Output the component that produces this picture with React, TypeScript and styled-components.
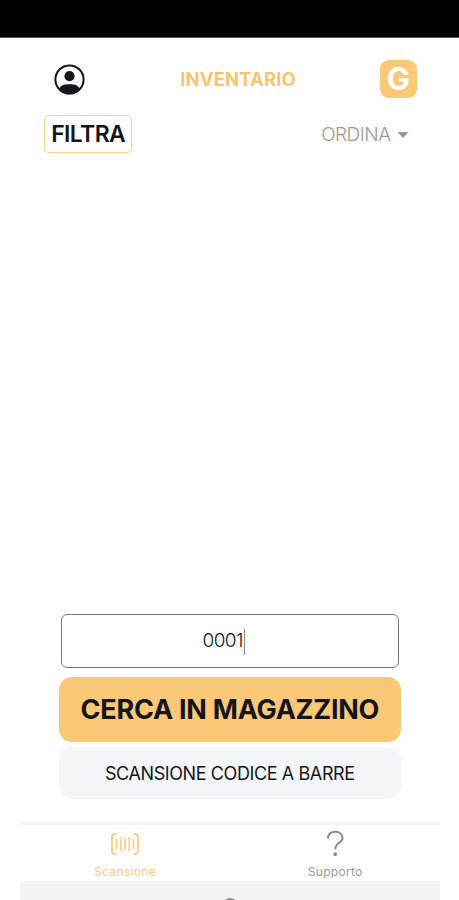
import React from "react";
import styled, { createGlobalStyle } from "styled-components";

const AMBER = "#f9c978";

const GlobalStyle = createGlobalStyle`
  * { box-sizing: border-box; }
  body { margin: 0; background: #fefefe; overflow: hidden; }
`;

const Screen = styled.div`
  width: 459px;
  height: 900px;
  display: flex;
  flex-direction: column;
  overflow: hidden;
  background: #fefefe;
  font-family: Inter, "Open Sans", sans-serif;
  color: #15151b;
`;

const StatusBar = styled.div`
  height: 38px;
  flex: none;
  background: #000;
  border-bottom: 1px solid #555;
`;

const Header = styled.header`
  display: grid;
  grid-template-columns: 60px 1fr 60px;
  align-items: center;
  height: 38px;
  margin: 22px 42px 0 54px;
  flex: none;
`;

const Icon = styled.svg`
  display: block;
`;

const Label = styled.span<{ $size: number; $weight: number; $spacing?: number; $color?: string }>`
  font-size: ${(p) => p.$size}px;
  font-weight: ${(p) => p.$weight};
  letter-spacing: ${(p) => p.$spacing ?? 0}px;
  margin-right: ${(p) => -(p.$spacing ?? 0)}px;
  color: ${(p) => p.$color ?? "inherit"};
  line-height: 1.2;
  white-space: nowrap;
`;

const Title = styled.h1`
  margin: 0 0 0 5px;
  display: flex;
  justify-content: center;
`;

const Logo = styled.div`
  justify-self: end;
  width: 37px;
  height: 38px;
  border-radius: 9px;
  background: ${AMBER};
  display: flex;
  align-items: center;
  justify-content: center;
`;

const Toolbar = styled.div`
  display: flex;
  justify-content: space-between;
  align-items: center;
  height: 38px;
  margin: 17px 50px 0 44px;
  flex: none;
`;

const FilterButton = styled.button`
  width: 88px;
  height: 38px;
  padding: 2px 0 0 1px;
  border: 1.5px solid #fad08c;
  border-radius: 5px;
  background: #fff;
  color: inherit;
  font-family: inherit;
  display: flex;
  align-items: center;
  justify-content: center;
`;

const SortButton = styled.button`
  border: 0;
  padding: 2px 0 0;
  background: none;
  font-family: inherit;
  display: flex;
  align-items: center;
  gap: 6px;
`;

const Results = styled.main`
  flex: 1;
`;

const SearchForm = styled.section`
  width: 342px;
  margin: 0 0 23px 59px;
  flex: none;
  display: flex;
  flex-direction: column;
  align-items: center;
`;

const CodeField = styled.div`
  width: 338px;
  height: 54px;
  margin-bottom: 9px;
  padding: 1px 12px 0 0;
  border: 1px solid #777;
  border-radius: 6px;
  background: #fff;
  display: flex;
  align-items: center;
  justify-content: center;
`;

const Caret = styled.span`
  width: 1px;
  height: 26px;
  margin-left: 1px;
  background: #888;
`;

const ActionButton = styled.button<{ $primary?: boolean }>`
  width: 342px;
  height: ${(p) => (p.$primary ? 65 : 52)}px;
  margin-bottom: ${(p) => (p.$primary ? 5 : 0)}px;
  padding: 2px 0 0;
  border: 0;
  border-radius: 13px;
  background: ${(p) => (p.$primary ? AMBER : "#f4f6fa")};
  color: inherit;
  font-family: inherit;
  display: flex;
  align-items: center;
  justify-content: center;
`;

const Navigation = styled.nav`
  width: 420px;
  height: 59px;
  margin-left: 20px;
  flex: none;
  display: grid;
  grid-template-columns: 1fr 1fr;
  border-top: 3px solid #f6f6f6;
  background: #fff;
`;

const Tab = styled.a`
  display: flex;
  flex-direction: column;
  align-items: center;
  justify-content: space-between;
  padding: 5px 0 2px;
`;

const TabIcon = styled.span`
  height: 27px;
  display: flex;
  align-items: center;
`;

const HomeStrip = styled.footer`
  width: 420px;
  height: 19px;
  margin-left: 20px;
  flex: none;
  display: flex;
  justify-content: center;
  padding-top: 17px;
  background: #f4f4f4;
  overflow: hidden;
`;

const HomeButton = styled.div`
  flex: none;
  width: 16px;
  height: 16px;
  border-radius: 50%;
  background: #8d8d8d;
`;

const ProfileIcon = () => (
  <Icon width="31" height="31" viewBox="0 0 31 31">
    <circle cx="15.5" cy="15.5" r="14.1" fill="#fff" stroke="#15151b" strokeWidth="2" />
    <circle cx="15.5" cy="12.2" r="5.1" fill="#15151b" />
    <path d="M5.4 24.6C6.500 21.5 9.500 20.2 15.5 20.2s9 1.3 10.100 4.400a13.6 13.6 0 0 1-20.200 0Z" fill="#15151b" />
  </Icon>
);

const ScanIcon = () => (
  <Icon width="31" height="24" viewBox="0 0 31 24" fill="none" stroke="#f8cf8b" strokeWidth="2">
    <path d="M6.500 2H5Q2 2 2 5v14Q2 22 5 22H6.500M23.500 2H25Q28 2 28 5v14Q28 22 25 22H23.500" />
    <path d="M6.500 7v10M10.700 5v14M15 6v12M19.300 5v14M23.500 7v10" strokeWidth="1.800" />
  </Icon>
);

const QuestionIcon = () => (
  <Icon width="20" height="27" viewBox="0 0 20 27" fill="none">
    <path d="M2.800 8.500C2.800 4.200 6 1.800 10.200 1.800s7.300 2.500 7.300 6.200c0 5.200-7.300 4.500-7.300 11.300" stroke="#888" strokeWidth="2" />
    <rect x="8.500" y="22.500" width="3.400" height="3.400" rx="0.800" fill="#888" />
  </Icon>
);

export default function App() {
  return (
    <>
      <GlobalStyle />
      <Screen>
        <StatusBar />
        <Header>
          <ProfileIcon />
          <Title>
            <Label $size={18.5} $weight={700} $spacing={0.1} $color="#f7c572">INVENTARIO</Label>
          </Title>
          <Logo>
            <Label $size={31} $weight={700} $color="#fff">G</Label>
          </Logo>
        </Header>
        <Toolbar>
          <FilterButton>
            <Label $size={23} $weight={600} $spacing={-0.6}>FILTRA</Label>
          </FilterButton>
          <SortButton>
            <Label $size={19} $weight={300} $spacing={-0.5} $color="#999">ORDINA</Label>
            <Icon width="12" height="6" viewBox="0 0 12 6">
              <path d="M0.500 0h11L6 6Z" fill="#999" />
            </Icon>
          </SortButton>
        </Toolbar>
        <Results />
        <SearchForm>
          <CodeField>
            <Label $size={19} $weight={300} $spacing={-0.6}>0001</Label>
            <Caret />
          </CodeField>
          <ActionButton $primary>
            <Label $size={27} $weight={700} $spacing={-0.25}>CERCA IN MAGAZZINO</Label>
          </ActionButton>
          <ActionButton>
            <Label $size={18} $weight={400} $spacing={-0.4}>SCANSIONE CODICE A BARRE</Label>
          </ActionButton>
        </SearchForm>
        <Navigation>
          <Tab>
            <TabIcon><ScanIcon /></TabIcon>
            <Label $size={12} $weight={400} $spacing={0.3} $color="#f8ca80">Scansione</Label>
          </Tab>
          <Tab>
            <TabIcon><QuestionIcon /></TabIcon>
            <Label $size={12} $weight={400} $spacing={0.3} $color="#999">Supporto</Label>
          </Tab>
        </Navigation>
        <HomeStrip>
          <HomeButton />
        </HomeStrip>
      </Screen>
    </>
  );
}
